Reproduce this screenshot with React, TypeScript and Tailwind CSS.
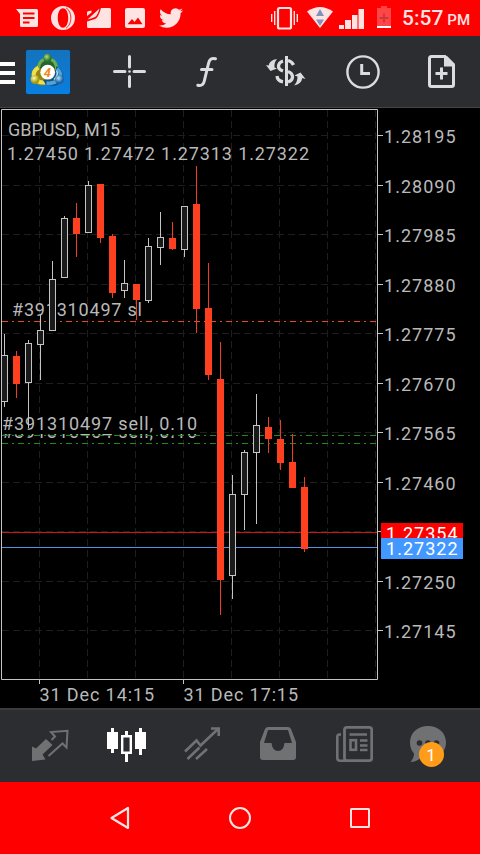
import { ReactNode } from "react";

type Candle = {
  high: number;
  top: number;
  bottom: number;
  low: number;
  bear?: boolean;
};

// one candle per 12px step, values are chart y positions
const CANDLES: Candle[] = [
  { high: 334, top: 355, bottom: 402, low: 407 },
  { high: 351, top: 356, bottom: 384, low: 398, bear: true },
  { high: 340, top: 343, bottom: 383, low: 428 },
  { high: 315, top: 330, bottom: 345, low: 380 },
  { high: 261, top: 279, bottom: 331, low: 331 },
  { high: 216, top: 218, bottom: 278, low: 278 },
  { high: 203, top: 218, bottom: 234, low: 257, bear: true },
  { high: 181, top: 185, bottom: 233, low: 233 },
  { high: 184, top: 184, bottom: 238, low: 243, bear: true },
  { high: 234, top: 236, bottom: 293, low: 298, bear: true },
  { high: 260, top: 283, bottom: 291, low: 298 },
  { high: 284, top: 284, bottom: 300, low: 320, bear: true },
  { high: 238, top: 246, bottom: 301, low: 303 },
  { high: 212, top: 237, bottom: 248, low: 265 },
  { high: 222, top: 238, bottom: 249, low: 250, bear: true },
  { high: 206, top: 206, bottom: 250, low: 257 },
  { high: 166, top: 204, bottom: 309, low: 333, bear: true },
  { high: 263, top: 308, bottom: 375, low: 380, bear: true },
  { high: 342, top: 379, bottom: 580, low: 615, bear: true },
  { high: 475, top: 494, bottom: 576, low: 599 },
  { high: 450, top: 452, bottom: 495, low: 530 },
  { high: 394, top: 425, bottom: 453, low: 524 },
  { high: 417, top: 427, bottom: 439, low: 453, bear: true },
  { high: 420, top: 439, bottom: 463, low: 470, bear: true },
  { high: 434, top: 462, bottom: 488, low: 488, bear: true },
  { high: 477, top: 487, bottom: 549, low: 552, bear: true },
];

const PRICES = [
  { y: 135.5, label: "1.28195" },
  { y: 185.5, label: "1.28090" },
  { y: 234.5, label: "1.27985" },
  { y: 284.5, label: "1.27880" },
  { y: 333.5, label: "1.27775" },
  { y: 383.5, label: "1.27670" },
  { y: 432.5, label: "1.27565" },
  { y: 482.5, label: "1.27460" },
  { y: 531.5, label: "" },
  { y: 581.5, label: "1.27250" },
  { y: 630.5, label: "1.27145" },
];

const COLUMNS = [39.5, 87.5, 135.5, 183.5, 231.5, 279.5, 327.5, 375.5];

// viewBox is "x y w h" in bar coordinates, drawn 1:1
function Icon({ box, className = "", children }: { box: string; className?: string; children: ReactNode }) {
  const [, , w, h] = box.split(" ");
  return (
    <svg viewBox={box} width={w} height={h} fill="none" className={`block shrink-0 ${className}`}>
      {children}
    </svg>
  );
}

function StatusBar() {
  return (
    <header className="flex h-9 shrink-0 items-start bg-[#ff0000] pl-4 text-[#ffe2e2]">
      <Icon box="16 0 22 36">
        <path d="M16 9H36.500Q38 9 38 10.500V25.500Q38 27 36.500 27H21.500Q20 27 20 25.500V14Z" fill="currentColor" />
        <path d="M23 13.500H34.500M23 18H34.500M23 22.500H29.500" stroke="#f00" strokeWidth="1.8" />
      </Icon>
      <Icon box="51 0 24 36" className="ml-[13px]">
        <path
          fillRule="evenodd"
          d="M63 6A12 12 0 1 1 63 30A12 12 0 1 1 63 6ZM63 8.300C59.800 8.300 57.800 12.500 57.800 18S59.800 27.700 63 27.700S68.200 23.500 68.200 18S66.200 8.300 63 8.300Z"
          fill="currentColor"
        />
        <path d="M66 7.800C72.500 11.500 72.500 24.500 66 28.200" stroke="#f00" strokeWidth="0.8" />
      </Icon>
      <Icon box="87 0 24 36" className="ml-3">
        <path d="M101 8H109.500Q111 8 111 9.500V26.500Q111 28 109.500 28H88.500Q87 28 87 26.500V21.500L95 19Q98.500 17.500 101 8Z" fill="currentColor" />
        <path d="M87 16V12.500Q87 11.500 88 11.200L91.500 10.500V12.500ZM87.500 19.500L99.500 8.500Q97.500 15.500 95 17Q91 18.500 87.500 19.500Z" fill="currentColor" />
      </Icon>
      <Icon box="125 0 20 36" className="ml-3.5">
        <rect x="125" y="8" width="20" height="20" rx="2" fill="currentColor" />
        <path d="M127.500 24.200L132 19L134.500 22L138 17.500L142.500 24.200Z" fill="#f00" />
      </Icon>
      <Icon box="159 0 24 36" className="ml-3.5">
        <path
          transform="translate(159 6)"
          d="M23.950 4.570a10 10 0 0 1-2.820.770 4.960 4.960 0 0 0 2.160-2.720c-.950.560-2 .960-3.130 1.180a4.920 4.920 0 0 0-8.380 4.480C7.690 8.100 4.070 6.130 1.640 3.160a4.820 4.820 0 0 0-.670 2.480c0 1.710.870 3.210 2.190 4.100a4.900 4.900 0 0 1-2.230-.620v.060a4.920 4.920 0 0 0 3.950 4.830 5 5 0 0 1-2.210.080 4.940 4.940 0 0 0 4.600 3.420A9.870 9.870 0 0 1 0 19.540a14 14 0 0 0 7.560 2.210c9.050 0 14-7.500 14-13.980 0-.210 0-.420-.020-.630a9.940 9.940 0 0 0 2.460-2.550z"
          fill="currentColor"
        />
      </Icon>

      <Icon box="271 0 27 36" className="ml-[88px]">
        <rect x="278" y="8" width="13" height="20.500" rx="1.500" stroke="currentColor" strokeWidth="2.200" />
        <path d="M271.700 14V22M274.700 11V25M294.300 11V25M297.300 14V22" stroke="currentColor" strokeWidth="1.400" />
      </Icon>
      <Icon box="307 0 26 36" className="ml-[9px]">
        <path d="M307 11.500Q320 2.500 333 11.500L320 28Z" fill="currentColor" />
        <path d="M320 9L324 16H316ZM316 19.500H324L320 26Z" fill="#7d94bd" />
      </Icon>
      <Icon box="339 0 25 36" className="ml-1.5">
        <path d="M339 25H344V29H339ZM345 20H351V29H345ZM352 15H357.500V29H352ZM358.500 9H364V29H358.500Z" fill="currentColor" />
      </Icon>
      <Icon box="377 0 14 36" className="ml-[13px]">
        <path d="M377 8H381V6H387V8H391V26H377Z" fill="#ff4545" />
        <path d="M377 26H391V28H377Z" fill="#fff" />
        <path d="M384 13.500V22.500M379.500 18H388.500" stroke="#cf3838" strokeWidth="2" />
      </Icon>
      <p className="ml-[11px] flex items-baseline gap-1 whitespace-nowrap font-['Roboto',sans-serif] text-[21px] leading-[37px] font-medium">
        5:57 <span className="text-[15px]">PM</span>
      </p>
    </header>
  );
}

function Toolbar() {
  return (
    <nav className="flex h-[72px] shrink-0 items-start border-b border-[#424345] bg-[#2c2d31] text-[#dcdcde]">
      <Icon box="0 36 15 71">
        <path d="M0 64H15M0 73H15M0 82H15" stroke="#fff" strokeWidth="4" />
      </Icon>
      <Icon box="25 36 46 71" className="ml-2.5">
        <defs>
          <linearGradient id="tile" x1="0" y1="0" x2="0" y2="1">
            <stop offset="0" stopColor="#1473bd" />
            <stop offset="1" stopColor="#087fe0" />
          </linearGradient>
          <radialGradient id="green" cx="0.4" cy="0.35">
            <stop offset="0" stopColor="#b5da7a" />
            <stop offset="1" stopColor="#26752f" />
          </radialGradient>
          <radialGradient id="yellow" cx="0.4" cy="0.35">
            <stop offset="0" stopColor="#fffbb0" />
            <stop offset="1" stopColor="#a89a10" />
          </radialGradient>
          <radialGradient id="blue" cx="0.4" cy="0.35">
            <stop offset="0" stopColor="#b4e4fa" />
            <stop offset="1" stopColor="#1b62a4" />
          </radialGradient>
        </defs>
        <rect x="25.500" y="49.500" width="45" height="45" rx="2" fill="#123a5c" />
        <rect x="26" y="50" width="44" height="44" rx="2" fill="url(#tile)" />
        <circle cx="47.500" cy="69" r="10.500" fill="#23662f" />
        <path d="M38.500 70Q38 62 44 59.500M56.500 70Q57 62 51 59.500" stroke="#6fae4d" strokeWidth="3" />
        <path d="M38 65.500Q30 69 31.500 80Q38 87.500 46 84.500L48 78Z" fill="#8f8614" />
        <path d="M38.500 67.500Q32.500 71 34 77Q37 83 45 82.500" stroke="#efe04a" strokeWidth="4" />
        <path d="M56.500 66Q65 71 63 81Q56 88.500 45.500 84L43 80L54 77Z" fill="#164f80" />
        <path d="M57 68.500Q62 73 60 78.500Q55 84 46.500 83" stroke="#4fa3d6" strokeWidth="3.500" />
        <path d="M56.500 70.500Q59 75 54 79.500" stroke="#b3dcf0" strokeWidth="1.500" />
        <circle cx="47.500" cy="58" r="4.200" fill="url(#green)" />
        <circle cx="35" cy="79.500" r="4.500" fill="url(#yellow)" />
        <circle cx="59.500" cy="79.500" r="4.500" fill="url(#blue)" />
        <circle cx="47.700" cy="72.200" r="7.400" fill="#fff" />
        <text x="47.300" y="76.900" textAnchor="middle" fill="#f28b1e" className="font-['Roboto',sans-serif] text-[13px] font-bold italic">
          4
        </text>
      </Icon>
      <Icon box="113 36 33 71" className="ml-[42px]">
        <path d="M129.500 56.500V67M129.500 76.500V86.500M114.500 71.500H125M134 71.500H144.500" stroke="currentColor" strokeWidth="3" strokeLinecap="round" />
        <circle cx="129.500" cy="71.500" r="1.300" fill="currentColor" />
      </Icon>
      <Icon box="196 36 22 71" className="ml-[50px]">
        <path
          d="M215.500 58.800Q210 57 208.500 63.500L204.300 81Q203 86.500 197.800 85.300M201.500 69.500H212"
          stroke="currentColor"
          strokeWidth="3"
          strokeLinecap="round"
        />
      </Icon>
      <Icon box="265 36 41 71" className="ml-[47px]">
        <path d="M286.500 56V86" stroke="currentColor" strokeWidth="3" />
        <path d="M283 61Q278.500 62.500 278.500 66.500Q278.500 69.500 283 71M277 76Q277.500 81 283 81.800" stroke="currentColor" strokeWidth="3.300" />
        <path d="M288 60.500Q292 61.500 293.500 65M288 71.500Q292.500 73 292.500 77Q292.500 80.500 288 82" stroke="currentColor" strokeWidth="3.300" />
        <path d="M277 59Q269.500 60 268.700 65.500L266 65L270.500 71L277 68.500L274.500 67.500Q274 62 277 59Z" fill="currentColor" />
        <path d="M294 85.500Q301.500 84 302.300 78L305.500 79L300.500 72.500L294.500 75.500L297.500 76.500Q297.500 82 294 85.500Z" fill="currentColor" />
      </Icon>
      <Icon box="346 36 34 71" className="ml-10">
        <circle cx="363" cy="72" r="15.600" stroke="currentColor" strokeWidth="2.400" />
        <path d="M361.700 64V73.500H370" stroke="currentColor" strokeWidth="3" />
      </Icon>
      <Icon box="428 36 27 71" className="ml-12">
        <path
          d="M431.500 56.500H445L453.500 65V84.500Q453.500 86.500 451.500 86.500H431.500Q429.500 86.500 429.500 84.500V58.500Q429.500 56.500 431.500 56.500Z"
          stroke="currentColor"
          strokeWidth="3"
        />
        <path d="M444 56H447L454.500 63.500V66.500H444Z" fill="currentColor" />
        <path d="M441.500 67.500V79.500M435.500 73.500H447.500" stroke="currentColor" strokeWidth="3" />
      </Icon>
    </nav>
  );
}

function Chart() {
  return (
    <main className="h-[600px] shrink-0 bg-black">
      <svg viewBox="0 108 480 600" width="480" height="600" className="block font-['Roboto',sans-serif] text-[18px]" fill="none">
        <g stroke="#1e1e1e" strokeDasharray="7 4">
          {COLUMNS.map((x) => (
            <path key={x} d={`M${x} 110V679`} />
          ))}
          {PRICES.map(({ y }) => (
            <path key={y} d={`M2 ${y}H377`} />
          ))}
        </g>

        <path d="M2 321.500H377" stroke="#e8472e" strokeDasharray="6 4 2 4" />
        <path d="M2 443.500H377" stroke="#1f8a1f" strokeDasharray="6 4 2 4" />
        <path d="M2 532.500H377" stroke="#d01414" />
        <path d="M2 547.500H378" stroke="#4f93e6" />

        <g fill="#b9b9b9">
          <text x="8" y="136" textLength="112">GBPUSD, M15</text>
          <text x="7" y="160" textLength="302">1.27450 1.27472 1.27313 1.27322</text>
          <text x="12" y="316" textLength="130">#391310497 sl</text>
          <text x="2" y="438" textLength="195">#391310464 sell, 0.10</text>
          <rect x="2" y="413" width="198" height="21" fill="#000" />
          <text x="2" y="430" textLength="195">#391310497 sell, 0.10</text>
        </g>
        <path d="M2 435.500H377" stroke="#1f8a1f" strokeDasharray="6 4 2 4" />

        {CANDLES.map((candle, index) => {
          const x = 4.5 + index * 12;
          if (candle.bear) {
            return (
              <g key={x}>
                <path d={`M${x} ${candle.high}V${candle.low}`} stroke="#f03c22" />
                <rect x={x - 3.5} y={candle.top} width="7" height={candle.bottom - candle.top} fill="#ff4020" />
              </g>
            );
          }
          return (
            <g key={x} stroke="#c4c4c4">
              <path d={`M${x} ${candle.high}V${candle.low}`} />
              <rect x={x - 3} y={candle.top + 0.5} width="6" height={candle.bottom - candle.top - 1} fill="#1a1a1a" />
            </g>
          );
        })}

        <path d="M0 108H1V680H0Z" fill="#000" />
        <path d="M1.500 109.500H377.500V679.500H1.500Z" stroke="#c4c4c4" />
        <path d="M39.500 680V684M183.500 680V684" stroke="#c4c4c4" />
        <g fill="#b9b9b9">
          {PRICES.map(({ y, label }) => (
            <g key={y}>
              <path d={`M378 ${y}H383`} stroke="#c4c4c4" />
              {label && (
                <text x="384" y={Math.floor(y) + 7.5} textLength="71.5">
                  {label}
                </text>
              )}
            </g>
          ))}
          <text x="39.500" y="701" textLength="114.5">31 Dec 14:15</text>
          <text x="183.500" y="701" textLength="114.5">31 Dec 17:15</text>
        </g>

        <rect x="381" y="523" width="82" height="16" fill="#ff0000" />
        <text x="386" y="540" textLength="71.5" fill="#fff">1.27354</text>
        <rect x="381" y="538" width="82" height="21" fill="#4398ff" />
        <text x="386" y="555" textLength="71.5" fill="#fff">1.27322</text>
      </svg>
    </main>
  );
}

function TabBar() {
  return (
    <nav className="flex h-[74px] shrink-0 items-start border-t-2 border-[#3b3c3e] bg-[#2c2d31] pl-8 text-[#707173]">
      <Icon box="32 710 37 72">
        <path d="M32 746.500L36 748.500L46 739L52.500 745L42.500 754.500L45.500 759.500L32 761Z" fill="currentColor" />
        <path d="M51.500 740L55 736.500L51 732L67.500 730.800L66.500 747.500L62.500 743.500L48.500 756" stroke="currentColor" strokeWidth="2" />
      </Icon>
      <Icon box="107 710 39 72" className="ml-[38px]">
        <path
          d="M107 732H111V728H114V732H118V749H114V753H111V749H107ZM135 732H139V728H142V732H146V749H142V755H139V749H135Z"
          fill="#fff"
        />
        <path d="M122.200 736.200H130.800V752.800H122.200Z" stroke="#fff" strokeWidth="2.400" />
        <path d="M126.500 731V736M126.500 753V762" stroke="#fff" strokeWidth="3" />
      </Icon>
      <Icon box="184 710 37 72" className="ml-[38px]">
        <path d="M185 751.500L196.500 740.500L200.500 745.500L217.500 729.500M187.500 759L199.500 747.500M196 759L207 749" stroke="currentColor" strokeWidth="2.600" />
        <path d="M211 728.500H218.700V736" stroke="currentColor" strokeWidth="2.600" />
      </Icon>
      <Icon box="260 710 36 72" className="ml-[39px]">
        <path
          fillRule="evenodd"
          d="M268 727H288Q290 727 291 729L296 742V757Q296 760 293 760H263Q260 760 260 757V742L265 729Q266 727 268 727ZM268 730L264 743H271.500Q272.500 751 278 751Q283.500 751 284.500 743H292L288 730Z"
          fill="currentColor"
        />
      </Icon>
      <Icon box="336 710 37 72" className="ml-10">
        <rect x="344.500" y="727.300" width="27.200" height="33.400" rx="2.500" stroke="currentColor" strokeWidth="2.800" />
        <path d="M341 734.500H339.500Q337.300 734.500 337.300 737V758Q337.300 760.700 340 760.700H347" stroke="currentColor" strokeWidth="2.600" />
        <path d="M349.500 734.500H367M360 740.500H367.500M360 745.500H367.500M360 750H367.500" stroke="currentColor" strokeWidth="2.600" />
        <rect x="350.500" y="740.200" width="5.500" height="9.600" stroke="currentColor" strokeWidth="2.600" />
      </Icon>
      <Icon box="409 710 37 72" className="ml-9">
        <path
          d="M428 726C438.500 726 446 733 446 742.500S438.500 759 428 759C425 759 422.500 758.500 420.500 758Q416 762 410.500 762Q414 758 414 753.500Q410 749 410 742.500C410 733 417.500 726 428 726Z"
          fill="currentColor"
        />
        <g fill="#2c2d31">
          <circle cx="419.500" cy="743" r="2.800" />
          <circle cx="428" cy="743" r="2.800" />
          <circle cx="436.500" cy="743" r="2.800" />
        </g>
        <circle cx="431.500" cy="754.500" r="12.500" fill="#ff9c1a" />
        <text x="431" y="760.500" textAnchor="middle" fill="#fff" className="font-['Roboto',sans-serif] text-[17px]">
          1
        </text>
      </Icon>
    </nav>
  );
}

function SystemNav() {
  return (
    <footer className="flex h-[72px] shrink-0 items-center justify-center gap-[98px] bg-[#ff0000] text-[#ffe2e2]">
      <Icon box="0 0 22 24">
        <path d="M19 2V22L2.500 12Z" stroke="currentColor" strokeWidth="2.200" strokeLinejoin="round" />
      </Icon>
      <Icon box="0 0 22 24">
        <circle cx="11" cy="12" r="10" stroke="currentColor" strokeWidth="2" />
      </Icon>
      <Icon box="0 0 22 24">
        <rect x="2" y="3" width="18" height="18" rx="0.500" stroke="currentColor" strokeWidth="2" />
      </Icon>
    </footer>
  );
}

export default function App() {
  return (
    <div className="flex h-[854px] w-[480px] flex-col overflow-hidden bg-black">
      <StatusBar />
      <Toolbar />
      <Chart />
      <TabBar />
      <SystemNav />
    </div>
  );
}
